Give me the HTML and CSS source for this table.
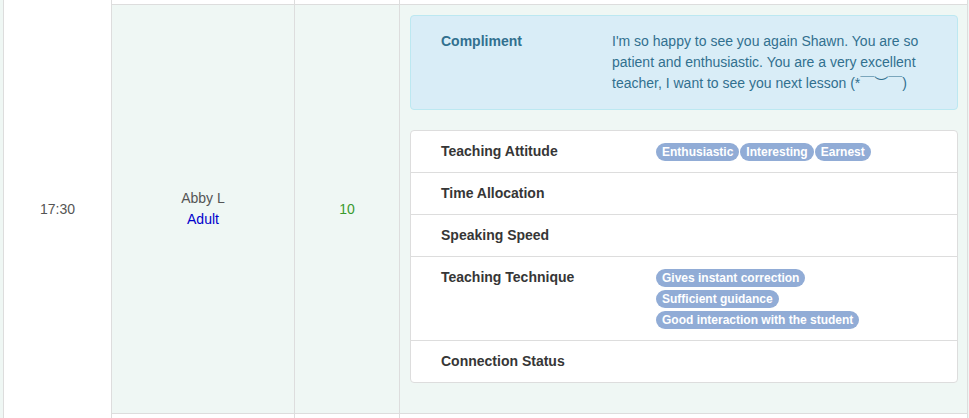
FILE: index.html
```html
<!DOCTYPE html>
<html lang="en">
<head>
<meta charset="utf-8">
<title>Lesson feedback</title>
<link rel="stylesheet" href="styles.css">
</head>
<body>
<div class="page">
  <div class="sched">
    <div class="cell time">17:30</div>
    <div class="cell edge"></div>
    <div class="cell edge"></div>
    <div class="cell edge"></div>

    <div class="cell shade center">
      <div class="student">
        <span class="name">Abby L</span>
        <span class="kind">Adult</span>
      </div>
    </div>
    <div class="cell shade center"><span class="score">10</span></div>
    <div class="cell shade detail">
      <div class="alert">
        <div class="alert-label">Compliment</div>
        <div class="alert-text">I'm so happy to see you again Shawn. You are so patient and enthusiastic. You are a very excellent teacher, I want to see you next lesson (*￣︶￣)</div>
      </div>
      <div class="card">
        <div class="row">
          <div class="label">Teaching Attitude</div>
          <div class="tags"><span class="tag">Enthusiastic</span><span class="tag">Interesting</span><span class="tag">Earnest</span></div>
        </div>
        <div class="row">
          <div class="label">Time Allocation</div>
          <div class="tags"></div>
        </div>
        <div class="row">
          <div class="label">Speaking Speed</div>
          <div class="tags"></div>
        </div>
        <div class="row">
          <div class="label">Teaching Technique</div>
          <div class="tags"><span class="tag">Gives instant correction</span><span class="tag">Sufficient guidance</span><span class="tag">Good interaction with the student</span></div>
        </div>
        <div class="row">
          <div class="label">Connection Status</div>
          <div class="tags"></div>
        </div>
      </div>
    </div>

    <div class="cell edge"></div>
    <div class="cell edge"></div>
    <div class="cell edge"></div>
  </div>
</div>
</body>
</html>
```
FILE: styles.css
```css
html, body {
  margin: 0;
  padding: 0;
}
body {
  background: #eff7f4;
  font-family: "Liberation Sans", Arial, "Noto Sans CJK SC", sans-serif;
  font-size: 14px;
  line-height: 21px;
  color: #555;
}
.page {
  padding-left: 3px;
  height: 418px;
  overflow: hidden;
}
.sched {
  display: grid;
  grid-template-columns: 107px 182px 104px 567px;
  grid-template-rows: 4px auto 4px;
  gap: 1px;
  padding: 0 1px;
  background: #dddddd;
  width: max-content;
}
.cell {
  background: #ffffff;
}
.time {
  grid-row: 1 / 4;
  display: flex;
  align-items: center;
  justify-content: center;
  color: #555;
}
.shade {
  background: #eff7f4;
}
.center {
  display: flex;
  align-items: center;
  justify-content: center;
  text-align: center;
}
.student {
  display: flex;
  flex-direction: column;
  align-items: center;
}
.name {
  color: #555;
}
.kind {
  color: #0000cc;
}
.score {
  color: #3a9a2e;
}
.detail {
  padding: 10px 9px 10px 10px;
}
.alert {
  display: grid;
  grid-template-columns: 201px 1fr;
  background: #d9edf7;
  border: 1px solid #bce8f1;
  border-radius: 4px;
  color: #31708f;
  padding: 15px 15px 15px 0;
  margin-bottom: 20px;
}
.alert-label {
  font-weight: bold;
  padding-left: 30px;
}
.card {
  background: #ffffff;
  border: 1px solid #dddddd;
  border-radius: 4px;
  margin-bottom: 20px;
}
.row {
  display: grid;
  grid-template-columns: 245px 230px;
  padding: 10px 0;
  border-top: 1px solid #dddddd;
}
.row:first-child {
  border-top: none;
}
.label {
  font-weight: bold;
  color: #363636;
  padding-left: 30px;
}
.tags {
  line-height: 21px;
  min-height: 21px;
}
.tag {
  display: inline-block;
  vertical-align: middle;
  background: #91acd6;
  color: #ffffff;
  font-weight: bold;
  font-size: 12px;
  line-height: 18px;
  padding: 0 6px;
  margin-right: 1px;
  border-radius: 9px;
  white-space: nowrap;
}
```
